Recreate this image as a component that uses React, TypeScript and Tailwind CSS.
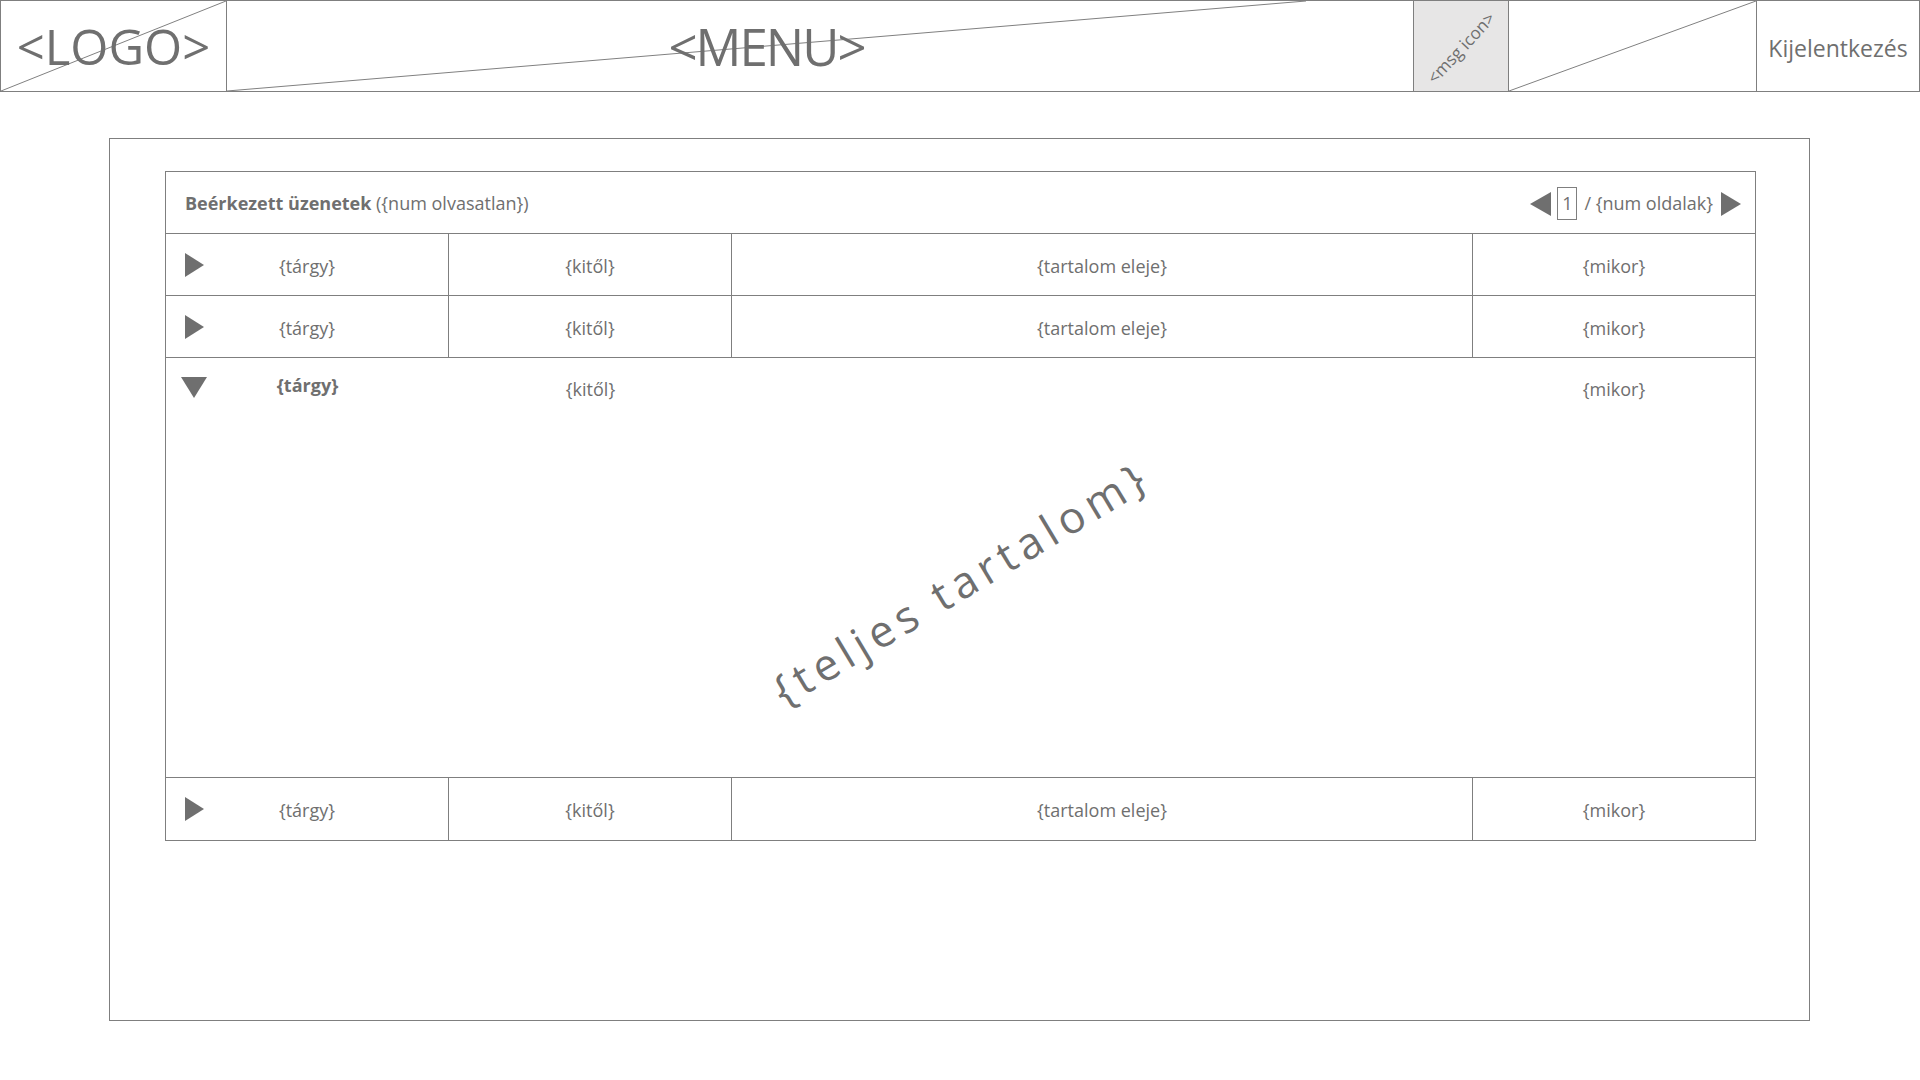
import React from "react";

const font = { fontFamily: '"Open Sans", "Noto Sans", sans-serif' };

function Tri({ dir, w, h }: { dir: "left" | "right" | "down"; w: number; h: number }) {
  const pts =
    dir === "right"
      ? `0,0 ${w},${h / 2} 0,${h}`
      : dir === "left"
      ? `${w},0 0,${h / 2} ${w},${h}`
      : `0,0 ${w},0 ${w / 2},${h}`;
  return (
    <svg width={w} height={h} viewBox={`0 0 ${w} ${h}`} className="shrink-0">
      <polygon points={pts} fill="#6f6f6f" />
    </svg>
  );
}

function Diagonal() {
  return (
    <svg className="absolute inset-0 h-full w-full" viewBox="0 0 100 100" preserveAspectRatio="none">
      <line x1="0" y1="100" x2="100" y2="0" stroke="#808080" strokeWidth="1" vectorEffect="non-scaling-stroke" />
    </svg>
  );
}

function Row({ last }: { last?: boolean }) {
  return (
    <div
      className={
        "grid h-[62px] grid-cols-[283px_283px_741px_1fr] text-[18px] " +
        (last ? "" : "border-b border-[#7f7f7f]")
      }
    >
      <div className="relative flex items-center justify-center border-r border-[#7f7f7f] pt-[3px]">
        <div className="absolute left-[19px] top-[19px]">
          <Tri dir="right" w={19} h={24} />
        </div>
        <span>{"{tárgy}"}</span>
      </div>
      <div className="flex items-center justify-center border-r border-[#7f7f7f] pt-[3px]">{"{kitől}"}</div>
      <div className="flex items-center justify-center border-r border-[#7f7f7f] pt-[3px]">{"{tartalom eleje}"}</div>
      <div className="flex items-center justify-center pt-[3px]">{"{mikor}"}</div>
    </div>
  );
}

export default function App() {
  return (
    <div className="min-h-screen w-[1920px] bg-white text-[#6f6f6f]" style={font}>
      {/* Header */}
      <header className="flex h-[92px] border border-[#7f7f7f]">
        <div className="relative flex w-[226px] shrink-0 items-center justify-center border-r border-[#7f7f7f]">
          <Diagonal />
          <span className="relative text-[49px] leading-none">&lt;LOGO&gt;</span>
        </div>
        <div className="flex w-[1186px] shrink-0">
          <div className="relative flex w-[1079px] items-center justify-center">
            <Diagonal />
            <span className="relative text-[51px] leading-none tracking-[-2px]">&lt;MENU&gt;</span>
          </div>
        </div>
        <div className="flex w-[96px] shrink-0 items-center justify-center border-x border-[#7f7f7f] bg-[#e7e6e6]">
          <span className="mt-[4px] -rotate-[47deg] whitespace-nowrap text-[17px]">&lt;msg icon&gt;</span>
        </div>
        <div className="relative w-[248px] shrink-0 border-r border-[#7f7f7f]">
          <Diagonal />
        </div>
        <div className="flex flex-1 items-center justify-center pt-[4px] text-[23px]">Kijelentkezés</div>
      </header>

      {/* Main */}
      <main className="pl-[109px] pt-[46px]">
        <div className="h-[883px] w-[1701px] border border-[#7f7f7f] pl-[55px] pt-[32px]">
          <div className="w-[1591px] border border-[#7f7f7f]">
            <div className="flex h-[62px] items-center justify-between border-b border-[#7f7f7f] pl-[19px] pr-[14px] pt-[2px] text-[18px]">
              <div>
                <span className="font-bold">Beérkezett üzenetek</span> ({"{num olvasatlan}"})
              </div>
              <div className="flex items-center">
                <Tri dir="left" w={21} h={24} />
                <span className="ml-[6px] flex h-[33px] w-[20px] items-center justify-center border border-[#7f7f7f]">1</span>
                <span className="ml-[7px]">/ {"{num oldalak}"}</span>
                <span className="ml-[8px]">
                  <Tri dir="right" w={20} h={24} />
                </span>
              </div>
            </div>
            <Row />
            <Row />
            <div className="flex h-[420px] flex-col border-b border-[#7f7f7f]">
              <div className="grid h-[58px] grid-cols-[283px_283px_741px_1fr] pt-[4px] text-[18px]">
                <div className="relative flex items-center justify-center">
                  <div className="absolute left-[15px] top-[15px]">
                    <Tri dir="down" w={26} h={21} />
                  </div>
                  <span className="-mt-[8px] font-bold">{"{tárgy}"}</span>
                </div>
                <div className="flex items-center justify-center">{"{kitől}"}</div>
                <div />
                <div className="flex items-center justify-center">{"{mikor}"}</div>
              </div>
              <div className="flex flex-1 items-center justify-center pb-[30px]">
                <span className="-rotate-[31deg] whitespace-nowrap text-[44px] tracking-[6px]">{"{teljes tartalom}"}</span>
              </div>
            </div>
            <Row last />
          </div>
        </div>
      </main>
    </div>
  );
}
